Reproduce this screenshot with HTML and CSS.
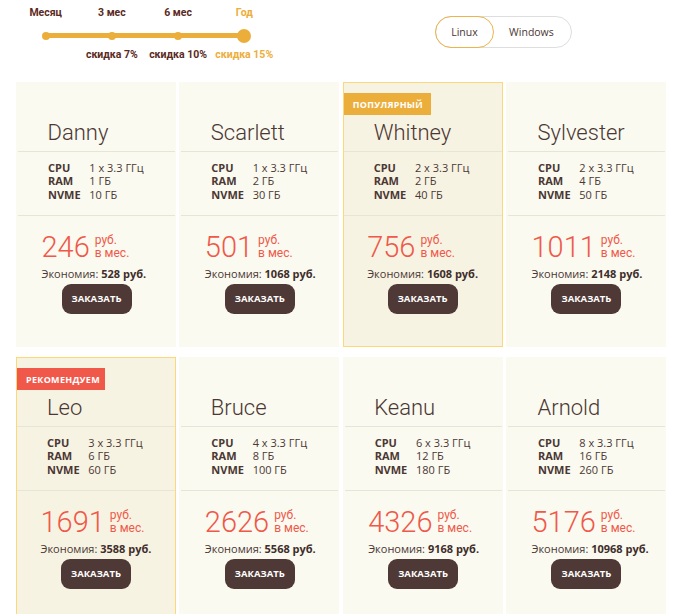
FILE: index.html
```html
<!DOCTYPE html>
<html lang="ru">
<head>
<meta charset="utf-8">
<title>Тарифы</title>
<link rel="stylesheet" href="styles.css">
</head>
<body>
<div class="top">
  <div class="slider">
    <div class="srow labels">
      <div class="cell">Месяц</div>
      <div class="cell">3 мес</div>
      <div class="cell">6 мес</div>
      <div class="cell active">Год</div>
    </div>
    <div class="srow track">
      <div class="cell"><span class="dot"></span></div>
      <div class="cell"><span class="dot"></span></div>
      <div class="cell"><span class="dot"></span></div>
      <div class="cell"><span class="dot big"></span></div>
    </div>
    <div class="srow discounts">
      <div class="cell"></div>
      <div class="cell">скидка 7%</div>
      <div class="cell">скидка 10%</div>
      <div class="cell active">скидка 15%</div>
    </div>
  </div>
  <div class="toggle">
    <span class="opt selected">Linux</span>
    <span class="opt">Windows</span>
  </div>
</div>

<div class="plans">
  <div class="card">
    <div class="head"><span class="name">Danny</span></div>
    <div class="specs"><b>CPU</b><span>1 x 3.3 ГГц</span><b>RAM</b><span>1 ГБ</span><b>NVME</b><span>10 ГБ</span></div>
    <div class="pricebox">
      <div class="price"><span class="num">246</span><span class="unit">руб.<br>в мес.</span></div>
      <div class="save">Экономия: <b>528 руб.</b></div>
      <a class="btn">ЗАКАЗАТЬ</a>
    </div>
  </div>
  <div class="card">
    <div class="head"><span class="name">Scarlett</span></div>
    <div class="specs"><b>CPU</b><span>1 x 3.3 ГГц</span><b>RAM</b><span>2 ГБ</span><b>NVME</b><span>30 ГБ</span></div>
    <div class="pricebox">
      <div class="price"><span class="num">501</span><span class="unit">руб.<br>в мес.</span></div>
      <div class="save">Экономия: <b>1068 руб.</b></div>
      <a class="btn">ЗАКАЗАТЬ</a>
    </div>
  </div>
  <div class="card hl">
    <span class="badge popular">ПОПУЛЯРНЫЙ</span>
    <div class="head"><span class="name">Whitney</span></div>
    <div class="specs"><b>CPU</b><span>2 x 3.3 ГГц</span><b>RAM</b><span>2 ГБ</span><b>NVME</b><span>40 ГБ</span></div>
    <div class="pricebox">
      <div class="price"><span class="num">756</span><span class="unit">руб.<br>в мес.</span></div>
      <div class="save">Экономия: <b>1608 руб.</b></div>
      <a class="btn">ЗАКАЗАТЬ</a>
    </div>
  </div>
  <div class="card">
    <div class="head"><span class="name">Sylvester</span></div>
    <div class="specs"><b>CPU</b><span>2 x 3.3 ГГц</span><b>RAM</b><span>4 ГБ</span><b>NVME</b><span>50 ГБ</span></div>
    <div class="pricebox">
      <div class="price"><span class="num">1011</span><span class="unit">руб.<br>в мес.</span></div>
      <div class="save">Экономия: <b>2148 руб.</b></div>
      <a class="btn">ЗАКАЗАТЬ</a>
    </div>
  </div>

  <div class="card hl">
    <span class="badge recommend">РЕКОМЕНДУЕМ</span>
    <div class="head"><span class="name">Leo</span></div>
    <div class="specs"><b>CPU</b><span>3 x 3.3 ГГц</span><b>RAM</b><span>6 ГБ</span><b>NVME</b><span>60 ГБ</span></div>
    <div class="pricebox">
      <div class="price"><span class="num">1691</span><span class="unit">руб.<br>в мес.</span></div>
      <div class="save">Экономия: <b>3588 руб.</b></div>
      <a class="btn">ЗАКАЗАТЬ</a>
    </div>
  </div>
  <div class="card">
    <div class="head"><span class="name">Bruce</span></div>
    <div class="specs"><b>CPU</b><span>4 x 3.3 ГГц</span><b>RAM</b><span>8 ГБ</span><b>NVME</b><span>100 ГБ</span></div>
    <div class="pricebox">
      <div class="price"><span class="num">2626</span><span class="unit">руб.<br>в мес.</span></div>
      <div class="save">Экономия: <b>5568 руб.</b></div>
      <a class="btn">ЗАКАЗАТЬ</a>
    </div>
  </div>
  <div class="card">
    <div class="head"><span class="name">Keanu</span></div>
    <div class="specs"><b>CPU</b><span>6 x 3.3 ГГц</span><b>RAM</b><span>12 ГБ</span><b>NVME</b><span>180 ГБ</span></div>
    <div class="pricebox">
      <div class="price"><span class="num">4326</span><span class="unit">руб.<br>в мес.</span></div>
      <div class="save">Экономия: <b>9168 руб.</b></div>
      <a class="btn">ЗАКАЗАТЬ</a>
    </div>
  </div>
  <div class="card">
    <div class="head"><span class="name">Arnold</span></div>
    <div class="specs"><b>CPU</b><span>8 x 3.3 ГГц</span><b>RAM</b><span>16 ГБ</span><b>NVME</b><span>260 ГБ</span></div>
    <div class="pricebox">
      <div class="price"><span class="num">5176</span><span class="unit">руб.<br>в мес.</span></div>
      <div class="save">Экономия: <b>10968 руб.</b></div>
      <a class="btn">ЗАКАЗАТЬ</a>
    </div>
  </div>
</div>
</body>
</html>
```

FILE: styles.css
```css
* { box-sizing: border-box; }
html, body { margin: 0; padding: 0; background: #ffffff; overflow: hidden; }
body {
  width: 680px;
  height: 614px;
  font-family: "Open Sans", "Noto Sans", sans-serif;
  color: #4b3733;
}

/* ---------- top bar ---------- */
.top {
  display: flex;
  height: 82px;
}
.slider {
  margin-left: 12.6px;
  display: flex;
  flex-direction: column;
  font-family: Roboto, "Liberation Sans", sans-serif;
  font-weight: 700;
  font-size: 10.5px;
  color: #5b2a22;
}
.srow { display: flex; }
.cell {
  width: 66.2px;
  display: flex;
  justify-content: center;
  align-items: center;
  white-space: nowrap;
}
.labels { margin-top: 5.8px; height: 14px; line-height: 14px; }
.discounts { margin-top: 5.5px; height: 14px; line-height: 14px; }
.cell.active { color: #ecae3b; }
.track {
  margin-top: 9.2px;
  height: 14px;
  background: linear-gradient(#ecae3b, #ecae3b) center / calc(100% - 66.2px) 5px no-repeat;
}
.dot {
  width: 8px;
  height: 8px;
  border-radius: 50%;
  background: #ecae3b;
}
.dot.big { width: 14px; height: 14px; }

.toggle {
  margin-left: 157.6px;
  margin-top: 15.7px;
  width: 137px;
  height: 32px;
  border: 1px solid #dedede;
  border-radius: 16px;
  display: flex;
  align-items: stretch;
  font-size: 10.5px;
  color: #4b3733;
}
.opt {
  display: flex;
  align-items: center;
  justify-content: center;
  border-radius: 16px;
}
.opt.selected {
  width: 59px;
  margin: -1px 0 -1px -1px;
  border: 1px solid #ecb44a;
}
.opt:not(.selected) { flex: 1; padding-right: 2px; }

/* ---------- plans ---------- */
.plans {
  display: grid;
  grid-template-columns: repeat(4, 160px);
  column-gap: 3.33px;
  row-gap: 10px;
  padding-left: 16px;
}
.card {
  position: relative;
  height: 265px;
  background: #fafaf0;
  border: 1px solid #fafaf0;
  padding: 0 0 0 1px;
  display: flex;
  flex-direction: column;
}
.card.hl {
  background: #f7f3e3;
  border-color: #fdd878;
  padding: 0;
}
.card.hl .head, .card.hl .specs { padding-left: 30px; }
.card.hl .pricebox { padding-left: 23.5px; }

.badge {
  position: absolute;
  top: 10px;
  left: 0;
  height: 22px;
  padding: 0 9px;
  display: flex;
  align-items: center;
  font-size: 9px;
  font-weight: 700;
  letter-spacing: 0.3px;
  color: #ffffff;
}
.badge.popular { background: #ecae3b; width: 87px; }
.badge.recommend { background: #f0584a; width: 88px; }

.head {
  height: 68.5px;
  padding: 36.5px 0 0 29.5px;
  border-bottom: 1px solid #e7e5d6;
}
.name {
  display: block;
  font-family: Roboto, "Liberation Sans", sans-serif;
  font-weight: 300;
  font-size: 22px;
  line-height: 26px;
  color: #4b3733;
}

.specs {
  display: grid;
  grid-template-columns: 41.3px auto;
  padding: 9px 0 0 30px;
  height: 64.5px;
  border-bottom: 1px solid #e7e5d6;
  font-size: 11px;
  line-height: 13.5px;
  align-content: start;
}
.specs b { font-weight: 700; color: #4b3733; }
.specs span { color: #4b3733; }

.pricebox {
  display: flex;
  flex-direction: column;
  padding: 17px 0 0 23.5px;
}
.price {
  display: flex;
  align-items: flex-end;
  color: #f0584a;
  font-family: Roboto, "Liberation Sans", sans-serif;
}
.num {
  font-weight: 300;
  font-size: 29px;
  line-height: 29px;
}
.unit {
  font-size: 12px;
  line-height: 13px;
  margin-left: 5px;
  margin-bottom: 2.4px;
}
.save {
  margin-top: 3.5px;
  font-size: 11px;
  line-height: 15px;
  white-space: nowrap;
}
.save b { font-weight: 700; color: #3f2e2b; }
.btn {
  align-self: center;
  margin-top: 3px;
  margin-left: -23.5px;
  width: 70px;
  height: 30px;
  border-radius: 9px;
  background: #4f3936;
  color: #ffffff;
  font-size: 9.5px;
  font-weight: 700;
  display: flex;
  align-items: center;
  justify-content: center;
}
```
